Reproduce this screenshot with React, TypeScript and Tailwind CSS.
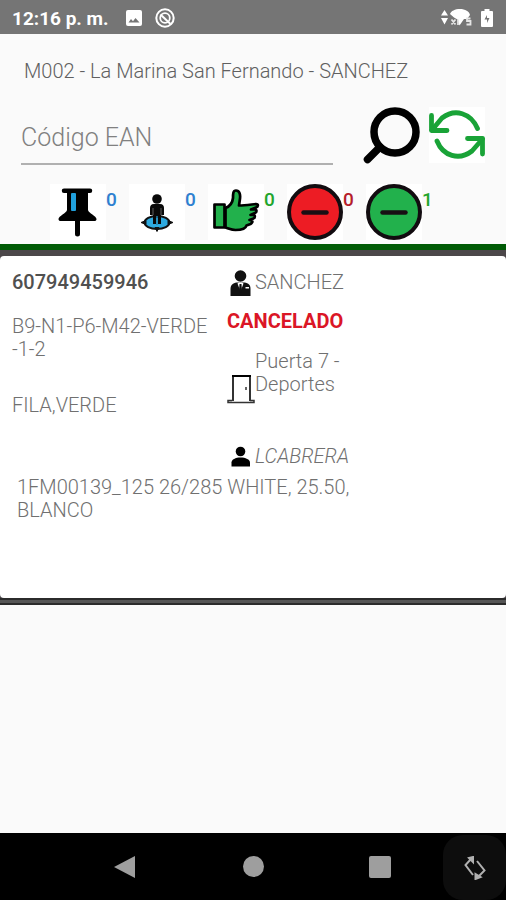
import type { ReactNode } from "react";

function ImageIcon() {
  return (
    <svg viewBox="0 0 18 18" className="size-[18px]" aria-hidden="true">
      <rect x="1" y="1" width="16" height="16" rx="2" fill="#fff" />
      <path d="M3.5 13.500l2.500-3.500 2 2.200 2.500-3.200 4 4.500z" fill="#757575" />
    </svg>
  );
}

function SyncOffIcon() {
  return (
    <svg viewBox="0 0 20 20" className="size-5" fill="none" stroke="#fff" aria-hidden="true">
      <circle cx="10" cy="10" r="8.700" strokeWidth="2" />
      <circle cx="10" cy="10" r="4.800" strokeWidth="1.800" />
      <path d="M5.500 6.500l10 9.500" strokeWidth="2" />
    </svg>
  );
}

function NetworkIcon() {
  return (
    <svg viewBox="0 0 32 20" className="h-5 w-8" aria-hidden="true">
      <path d="M4.500 2l3.500 5.500H1zM4.500 16.500L1 10h7z" fill="#fff" />
      <path d="M10 6c1-3 5-5 10-5 5 0 9.500 2.500 10 6l-3 4h-3l-4.500 6.500-2-6-3.500-2z" fill="#fff" />
      <path d="M11.500 11.500l4 5M15.500 11.500l-4 5M18 11.500v5.500M30.500 10.500h-3.500v2.500h3.500v3.500h-4" fill="none" stroke="#e5e5e5" strokeWidth="1.800" />
    </svg>
  );
}

function BatteryIcon() {
  return (
    <svg viewBox="0 0 14 20" className="h-5 w-3.5" aria-hidden="true">
      <path d="M4.500 1h5v2H12a1 1 0 0 1 1 1v14a1 1 0 0 1-1 1H2a1 1 0 0 1-1-1V4a1 1 0 0 1 1-1h2.500z" fill="#fff" />
      <path d="M7 7l-2.500 4.500H7V15l2.500-5H7z" fill="#757575" />
    </svg>
  );
}

function SearchIcon() {
  return (
    <svg viewBox="0 0 58 58" className="size-[58px]" fill="none" stroke="#000" aria-hidden="true">
      <circle cx="32" cy="25" r="21" strokeWidth="7.500" />
      <path d="M17 40L4.500 52.500" strokeWidth="7.500" strokeLinecap="round" />
    </svg>
  );
}

function RefreshIcon() {
  return (
    <svg viewBox="0 0 56 56" className="size-14 bg-white" fill="none" stroke="#19a337" strokeWidth="4.800" strokeLinecap="round" strokeLinejoin="round" aria-hidden="true">
      <path d="M48.500 21.500C42 6 26 1 13 11L3 23" />
      <path d="M2.500 8.500v15H18" />
      <path d="M8 34C14 49 30 54 43 44L53.500 32" />
      <path d="M38.500 31.500H53.500V47" />
    </svg>
  );
}

function PinIcon() {
  return (
    <svg viewBox="0 0 56 56" className="size-14 bg-white" aria-hidden="true">
      <path d="M14 4.500h26a2.200 2.200 0 0 1 0 4.500h-2v17c.5 3 8.500 6 8.500 9 0 1.500-1 2-2 2H30v13a2.500 2.500 0 0 1-5 0V37H10.500c-1 0-2-.5-2-2 0-3 8-6 8.500-9V9h-3a2.200 2.200 0 0 1 0-4.500z" fill="#000" />
      <rect x="21" y="9" width="5" height="18" rx="1" fill="#20a0dc" />
    </svg>
  );
}

function LocationIcon() {
  return (
    <svg viewBox="0 0 56 56" className="size-14 bg-white" aria-hidden="true">
      <ellipse cx="28" cy="38.500" rx="12.500" ry="6.500" fill="#2eaae0" stroke="#111" strokeWidth="2" />
      <path d="M12 38.500l5-2v4zM44 38.500l-5-2v4zM28 47.500l-2-4h4z" fill="#111" stroke="#111" strokeLinejoin="round" />
      <circle cx="28" cy="15" r="4.800" fill="#090909" />
      <path d="M25 20h6c3 0 4 2 4 4v7h-3v9h-3v-6h-2v6h-3v-9h-3v-7c0-2 1-4 4-4z" fill="#090909" />
      <path d="M24 24v7M32 24v7" stroke="#888" strokeWidth=".7" />
      <path d="M28 32v9" stroke="#2387b4" strokeWidth="1.500" />
    </svg>
  );
}

function ThumbIcon() {
  return (
    <svg viewBox="0 0 56 56" className="size-14 bg-white" fill="#22b14c" stroke="#000" strokeWidth="2.700" strokeLinejoin="round" aria-hidden="true">
      <path d="M6.500 20.500h10v23h-10z" />
      <path d="M17.500 24c5-2 7-5 7.500-10 0-4 0-7.500 3-7.500 3.500 0 4.500 4 4 8l-1 7c6 0 12-1 17-1.500 2.500 0 2.500 2.500 0 3.500l-5 2h4c2 0 2 3 0 3.500l-4.500 2h3c2 0 1.500 3 0 3.500l-4 1.500 2 .5c2 1 0 3-1 3.500l-4 1.500c-1 4-7 4.500-11 4.500-4 0-6.500-1.500-10-2.500z" />
    </svg>
  );
}

function MinusIcon({ fill }: { fill: string }) {
  return (
    <svg viewBox="0 0 56 56" className="size-14 bg-white" aria-hidden="true">
      <circle cx="28" cy="28" r="26" fill={fill} stroke="#120c10" strokeWidth="4" />
      <path d="M16.500 28.500h23" stroke="#180f14" strokeWidth="4.500" strokeLinecap="round" />
    </svg>
  );
}

function SellerIcon() {
  return (
    <svg viewBox="0 0 28 28" className="size-7" aria-hidden="true">
      <circle cx="13.500" cy="7" r="5.800" fill="#111" />
      <path d="M3.500 27v-7c0-4 2.500-6 6-6.500h8c4 .5 6 2.500 6 6.500v7z" fill="#111" />
      <path d="M10.500 14.500l3 8 3-8-1.500-1h-3zM18.500 18h3.500v1.500h-3.500z" fill="#fff" />
      <path d="M12.500 15h2l.5 7-1.500 2-1.500-2z" fill="#111" />
    </svg>
  );
}

function DoorIcon() {
  return (
    <svg viewBox="0 0 28 30" className="h-[30px] w-7" fill="none" stroke="#333" aria-hidden="true">
      <path d="M6 27V2h17v25" strokeWidth="2" />
      <path d="M5 2h19" stroke="#000" strokeWidth="2" />
      <path d="M5 26.500H1v2h26v-2h-4" strokeWidth="1.500" />
      <path d="M19 13v3" strokeWidth="1.500" />
    </svg>
  );
}

function PersonIcon() {
  return (
    <svg viewBox="0 0 28 28" className="size-7" fill="#000" aria-hidden="true">
      <circle cx="13.500" cy="8.500" r="4.800" />
      <path d="M4.500 23.500v-4c0-3 4-5 9-5s9.500 2 9.500 5v4z" />
    </svg>
  );
}

function Counter({ label, count, color, children }: { label: string; count: number; color: string; children: ReactNode }) {
  return (
    <button type="button" aria-label={label} className="flex w-[79px] items-start">
      {children}
      <span className={`pt-1 text-[19px] leading-[23px] font-medium ${color}`}>{count}</span>
    </button>
  );
}

export default function App() {
  return (
    <div className="flex min-h-screen flex-col bg-[#fafafa] font-['Roboto',sans-serif] text-xl leading-[23px] text-[#707070]">
      <header className="flex h-[34px] items-center bg-[#757575] px-3 pt-0.5 text-white">
        <span className="text-[19px] font-bold">12:16 p. m.</span>
        <span className="ml-4 flex items-center gap-3">
          <ImageIcon />
          <SyncOffIcon />
        </span>
        <span className="ml-auto flex items-center gap-2">
          <NetworkIcon />
          <BatteryIcon />
        </span>
      </header>

      <main className="flex grow flex-col">
        <h1 className="px-6 pt-[26px] text-xl leading-[23px] font-light text-[#606060]">M002 - La Marina San Fernando - SANCHEZ</h1>
        <form className="mt-6 flex items-start px-[21px]">
          <input
            type="text"
            aria-label="Código EAN"
            placeholder="Código EAN"
            className="mt-2 h-[50px] w-0 grow border-b-2 border-[#b0b0b0] bg-transparent pb-1 text-[25px] font-light outline-none placeholder:text-[#808080]"
          />
          <button type="button" aria-label="Buscar" className="ml-[30px]">
            <SearchIcon />
          </button>
          <button type="button" aria-label="Actualizar" className="ml-2">
            <RefreshIcon />
          </button>
        </form>

        <div className="mt-[19px] flex pl-[50px]">
          <Counter label="Pendientes" count={0} color="text-[#2f80d0]"><PinIcon /></Counter>
          <Counter label="Ubicados" count={0} color="text-[#2f80d0]"><LocationIcon /></Counter>
          <Counter label="Entregados" count={0} color="text-[#22a52c]"><ThumbIcon /></Counter>
          <Counter label="Negados" count={0} color="text-[#b51c2b]"><MinusIcon fill="#ed1c24" /></Counter>
          <Counter label="Cancelados" count={1} color="text-[#22a52c]"><MinusIcon fill="#22b14c" /></Counter>
        </div>

        <section className="mt-1 border-t-[6px] border-[#005a05] bg-[#4c474a] pt-1.5">
          <article className="rounded bg-white px-3 pt-[15px] pb-[76px] font-light">
            <div className="grid grid-cols-[215px_1fr]">
              <div>
                <h2 className="font-medium text-[#505050]">607949459946</h2>
                <p className="mt-[21px]">
                  B9-N1-P6-M42-VERDE
                  <br />
                  -1-2
                </p>
                <p className="mt-[33px]">FILA,VERDE</p>
              </div>
              <div>
                <div className="flex h-[23px] items-center">
                  <SellerIcon />
                  <span>SANCHEZ</span>
                </div>
                <p className="mt-4 font-bold text-[#db1626]">CANCELADO</p>
                <div className="mt-[17px] flex h-[54px]">
                  <span className="self-end">
                    <DoorIcon />
                  </span>
                  <p>
                    Puerta 7 -<br />
                    Deportes
                  </p>
                </div>
                <div className="mt-[41px] flex h-[23px] items-center">
                  <PersonIcon />
                  <em>LCABRERA</em>
                </div>
              </div>
            </div>
            <p className="mt-2 max-w-[360px] pl-[5px]">1FM00139_125 26/285 WHITE, 25.50, BLANCO</p>
          </article>
          <div className="h-[7px] border-y-2 border-[#2b2b2b] bg-[#555]" />
        </section>
      </main>

      <nav className="flex h-[67px] justify-end bg-black">
        <button type="button" aria-label="Atrás" className="flex w-32 items-center justify-center">
          <svg viewBox="0 0 24 24" className="size-6" fill="#9e9e9e" aria-hidden="true"><path d="M1 12L22 1v22z" /></svg>
        </button>
        <button type="button" aria-label="Inicio" className="flex w-32 items-center justify-center">
          <span className="size-[21px] rounded-full bg-[#9e9e9e]" />
        </button>
        <button type="button" aria-label="Recientes" className="flex w-[126px] items-center justify-center">
          <span className="size-[22px] rounded-xs bg-[#9e9e9e]" />
        </button>
        <button type="button" aria-label="Girar pantalla" className="mt-0.5 flex w-[63px] items-center justify-center rounded-[20px] bg-[#0d0d0d]">
          <svg viewBox="0 0 24 24" className="size-6" fill="none" stroke="#b0b0b0" strokeWidth="2" aria-hidden="true">
            <path d="M8 3L2.500 9l7.500 10M14 5l7.500 9.500-6 6" />
            <path d="M6 2l4-1v5zM12.500 18v5l5-2z" fill="#b0b0b0" />
          </svg>
        </button>
      </nav>
    </div>
  );
}
